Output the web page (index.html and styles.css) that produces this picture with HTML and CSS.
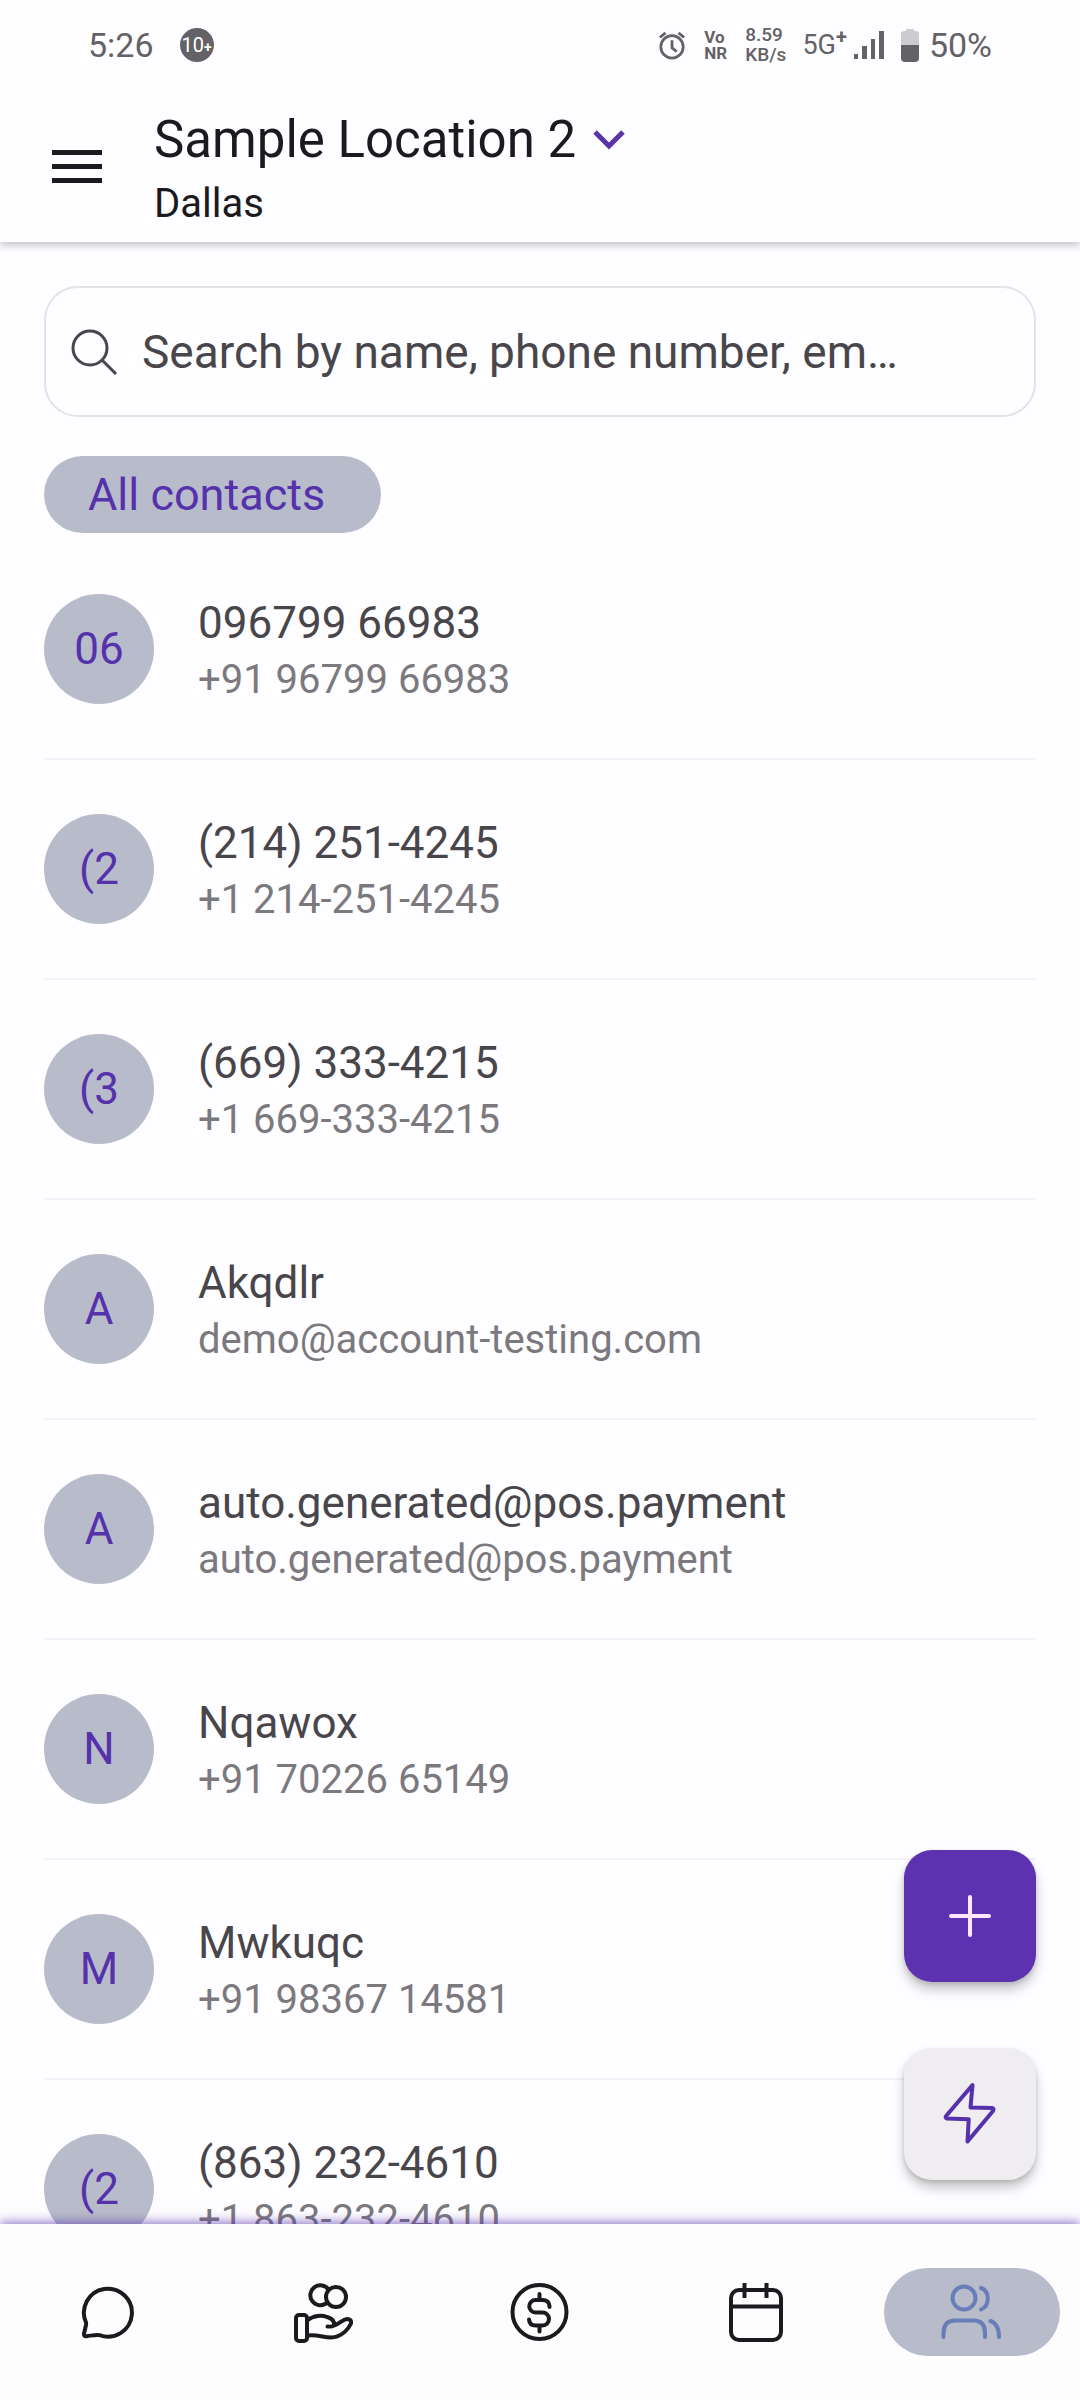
FILE: index.html
```html
<!DOCTYPE html>
<html lang="en">
<head>
	<meta charset="UTF-8">
	<title>Contacts</title>
	<meta name="viewport" content="width=device-width,initial-scale=1">
	<link rel="stylesheet" href="styles.css">
</head>
<body>
	<div class="status">
		<span class="time">5:26</span>
		<span class="notice">10<b>+</b></span>
		<div class="status_right">
			<svg class="alarm" width="28" height="32" viewBox="0 0 30 32" fill="none" stroke="currentColor" stroke-width="3">
				<circle cx="15" cy="18" r="12"/>
				<path d="M15 11v8l5 4M2 8l6-5M28 8l-6-5"/>
			</svg>
			<span class="vonr">Vo<br>NR</span>
			<span class="speed">8.59<br>KB/s</span>
			<span class="network">5G<sup>+</sup></span>
			<svg class="signal" width="32" height="30" viewBox="0 0 32 30" fill="currentColor">
				<path d="M1 24h4v5H1zM9 16h5v13H9zM18 9h4v20h-4zM26 1h5v28h-5z"/>
			</svg>
			<svg class="battery" width="18" height="34" viewBox="0 0 18 34">
				<path d="M5 1h8v2h2q3 0 3 3v11H0V6q0-3 3-3h2z" fill="#cdcbcf"/>
				<path d="M0 17h18v13q0 4-4 4H4q-4 0-4-4z" fill="#646266"/>
			</svg>
			<span class="time">50%</span>
		</div>
	</div>

	<header class="top">
		<button type="button" class="menu" aria-label="Menu"><i></i><i></i><i></i></button>
		<div class="location">
			<button type="button" class="location_name">Sample Location 2
				<svg width="34" height="24" viewBox="0 0 34 24" fill="none" stroke="#5b34a8" stroke-width="5"><path d="M3 4l14 14L31 4"/></svg>
			</button>
			<p>Dallas</p>
		</div>
	</header>

	<main class="content">
		<div class="search_wrap">
			<label for="search" aria-label="Search contacts">
				<svg width="48" height="48" viewBox="0 0 48 48" fill="none" stroke="#48464b" stroke-width="3"><circle cx="20" cy="20" r="17"/><path d="M32 32l14 14"/></svg>
			</label>
			<input type="search" id="search" placeholder="Search by name, phone number, em…">
		</div>
		<button type="button" class="chip">All contacts</button>

		<ul class="list">
			<li>
				<span class="avatar">06</span>
				<div class="info"><h2>096799 66983</h2><p>+91 96799 66983</p></div>
			</li>
			<li>
				<span class="avatar">(2</span>
				<div class="info"><h2>(214) 251-4245</h2><p>+1 214-251-4245</p></div>
			</li>
			<li>
				<span class="avatar">(3</span>
				<div class="info"><h2>(669) 333-4215</h2><p>+1 669-333-4215</p></div>
			</li>
			<li>
				<span class="avatar">A</span>
				<div class="info"><h2>Akqdlr</h2><p>demo@account-testing.com</p></div>
			</li>
			<li>
				<span class="avatar">A</span>
				<div class="info"><h2>auto.generated@pos.payment</h2><p>auto.generated@pos.payment</p></div>
			</li>
			<li>
				<span class="avatar">N</span>
				<div class="info"><h2>Nqawox</h2><p>+91 70226 65149</p></div>
			</li>
			<li>
				<span class="avatar">M</span>
				<div class="info"><h2>Mwkuqc</h2><p>+91 98367 14581</p></div>
			</li>
			<li>
				<span class="avatar">(2</span>
				<div class="info"><h2>(863) 232-4610</h2><p>+1 863-232-4610</p></div>
			</li>
		</ul>

		<!-- floating buttons -->
		<div class="fabs">
			<button type="button" class="fab fab_add" aria-label="Add contact">
				<svg class="icon" viewBox="0 0 66 66"><path d="M33 14v38M14 33h38"/></svg>
			</button>
			<button type="button" class="fab" aria-label="Quick actions">
				<svg class="icon" viewBox="0 0 66 66"><path d="M35.5 4L33.5 26.5 55 27Q57.5 27.5 56 30L30.500 60.500 31.700 38.300 10 37.500Q7.500 37 9.500 34.500Z"/></svg>
			</button>
		</div>
	</main>

	<nav class="tabs">
		<a href="#chats" aria-label="Chats">
			<svg class="icon" viewBox="0 0 66 66"><path d="M11 43.5A24 24 0 1 1 24.5 56.2C22 55.4 20 56 11.5 57.3Q8.5 57.6 9 54.5L11 46Q11.2 45 11 43.5Z"/></svg>
		</a>
		<a href="#payments" aria-label="Payments">
			<svg class="icon" viewBox="0 0 66 66">
				<path d="M37.5 10.5A10 10 0 1 0 35 24.500"/>
				<circle cx="45" cy="18" r="10"/>
				<rect x="5" y="36" width="11" height="26" rx="3"/>
				<path d="M16 41.5C23 36 31 36 36 38C41 39.5 44 42 43 46.5Q41 48 36.5 47.5M43 46.5C49 45 51 40.5 56 40Q61 40 60 44.5C57 51 51 56 46 57.5C37 61 28 54.5 16 56.5"/>
			</svg>
		</a>
		<a href="#money" aria-label="Money">
			<svg class="icon" viewBox="0 0 66 66">
				<circle cx="32.5" cy="33" r="27"/>
				<path d="M42.5 28v-1Q42 21 35.5 21H28.5A6 6 0 0 0 28.5 33.5H35.5A6.5 6.5 0 0 1 35.5 46.5H28.5Q22.5 46.5 22 40.5M32.5 15v6M32.5 46.5v6"/>
			</svg>
		</a>
		<a href="#calendar" aria-label="Calendar">
			<svg class="icon butt" viewBox="0 0 66 66"><rect x="8" y="11" width="50" height="50" rx="8"/><path d="M8 27.5h50M21.5 4v15M43.5 4v15"/></svg>
		</a>
		<a href="#contacts" class="active" aria-label="Contacts" aria-current="page">
			<svg class="icon" viewBox="0 0 66 66"><circle cx="25" cy="19" r="11.5"/><path d="M42 9C51 12 51 27 42 30.5M4.5 58v-4Q4.5 41.5 16 41.5H35Q46 41.5 46 54v4M51.5 42Q60 45 60 58"/></svg>
		</a>
	</nav>
</body>
</html>
```

FILE: styles.css
```css
*{box-sizing: border-box;}
body,ul,h2,p{margin: 0;padding: 0;}
body{
	height: 100vh;
	display: flex;
	flex-direction: column;
	overflow: hidden;
	background: #fefdff;
	color: #1c1a1e;
	font-family: Roboto, "Liberation Sans", sans-serif;
}
button{border: 0;padding: 0;background: none;color: inherit;font: inherit;cursor: pointer;}

.status{display: flex;align-items: center;height: 90px;padding: 0 88px;background: #fefdff;color: #646266;position: relative;z-index: 2;}
.time{font-size: 34px;}
.notice{width: 34px;height: 34px;margin-left: 26px;border-radius: 50%;background: #646266;color: #fff;font-size: 20px;line-height: 34px;text-align: center;white-space: nowrap;}
.notice b{font-size: 14px;}
.status_right{margin-left: auto;display: flex;align-items: center;}
.vonr,.speed{font-weight: 700;}
.vonr{margin-left: 18px;font-size: 17px;line-height: 16px;}
.speed{margin-left: 18px;font-size: 19px;font-weight: 500;line-height: 20px;}
.network{margin-left: 16px;font-size: 27px;line-height: 30px;}
.network sup{font-size: 20px;font-weight: 700;line-height: 0;}
.signal{margin-left: 6px;}
.battery{margin: 0 10px 0 16px;}

.top{display: flex;align-items: center;padding: 12px 48px 12px 52px;position: relative;z-index: 1;box-shadow: 0 3px 8px rgba(60,50,80,.3);}
.menu{display: grid;gap: 9px;width: 50px;}
.menu i{height: 5px;background: #1c1a1e;}
.location{margin-left: 52px;}
.location_name{display: flex;align-items: center;gap: 16px;font-size: 51px;line-height: 76px;}
.location p{font-size: 40px;line-height: 52px;}

.content{flex: 1;min-height: 0;overflow: hidden;position: relative;padding: 44px 44px 0;}
.search_wrap{display: flex;align-items: center;gap: 24px;height: 131px;padding: 0 24px;border: 2px solid #e4e2e8;border-radius: 34px;}
.search_wrap label{display: flex;}
#search{flex: 1;min-width: 0;border: 0;outline: 0;padding: 0;background: none;color: #48464b;font: 46px/60px Roboto, "Liberation Sans", sans-serif;}
#search::placeholder{color: #48464b;opacity: 1;}
.chip{display: block;height: 77px;margin: 39px 0 7px;padding: 0 56px 0 44px;border-radius: 39px;background: #b8bbca;color: #5631ac;font-size: 45px;}

.list{list-style: none;}
.list li{display: flex;align-items: center;gap: 44px;padding: 54px 0;border-bottom: 2px solid #f4f2f6;}
.avatar{flex: none;width: 110px;height: 110px;border-radius: 50%;background: #b8bbca;color: #5631ac;font-size: 44px;line-height: 110px;text-align: center;}
.info{height: 110px;}
.info h2{color: #48464b;font-size: 44px;font-weight: 400;line-height: 58px;}
.info p{color: #7b797e;font-size: 40px;line-height: 56px;}

.fabs{position: absolute;right: 44px;bottom: 44px;display: grid;gap: 66px;}
.fab{display: flex;align-items: center;justify-content: center;width: 132px;height: 132px;border-radius: 28px;background: #efedf0;color: #5631ac;box-shadow: 0 8px 12px rgba(0,0,0,.22), 0 2px 4px rgba(0,0,0,.12);}
.fab_add{background: #5d32b0;color: #ffe9ff;}

.icon{width: 66px;height: 66px;fill: none;stroke: currentColor;stroke-width: 4;stroke-linecap: round;stroke-linejoin: round;}
.butt{stroke-linecap: butt;}

.tabs{display: flex;height: 176px;padding: 44px 0;position: relative;background: #fdfdfe;box-shadow: 0 -2px 10px rgba(86,49,172,.65);}
.tabs a{flex: 1;display: flex;align-items: center;justify-content: center;margin: 0 20px;color: #1c1a1e;}
.tabs .active{border-radius: 44px;background: #b8bbca;color: #677eb8;}
```
